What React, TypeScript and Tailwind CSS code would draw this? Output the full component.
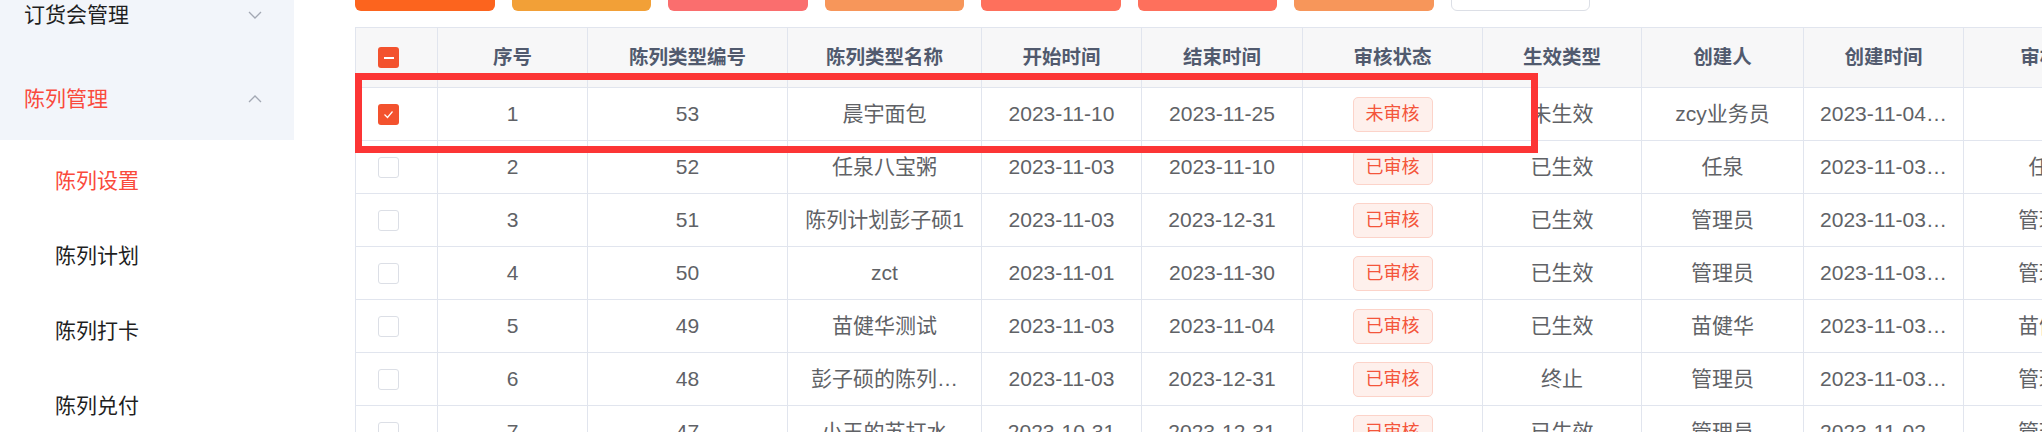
import React from 'react';

type Row = {
  no: number;
  code: number;
  name: string;
  start: string;
  end: string;
  audited: boolean;
  effect: string;
  creator: string;
  created: string;
  auditor: string;
};

const rows: Row[] = [
  { no: 1, code: 53, name: '晨宇面包', start: '2023-11-10', end: '2023-11-25', audited: false, effect: '未生效', creator: 'zcy业务员', created: '2023-11-04…', auditor: '' },
  { no: 2, code: 52, name: '任泉八宝粥', start: '2023-11-03', end: '2023-11-10', audited: true, effect: '已生效', creator: '任泉', created: '2023-11-03…', auditor: '任泉' },
  { no: 3, code: 51, name: '陈列计划彭子硕1', start: '2023-11-03', end: '2023-12-31', audited: true, effect: '已生效', creator: '管理员', created: '2023-11-03…', auditor: '管理员' },
  { no: 4, code: 50, name: 'zct', start: '2023-11-01', end: '2023-11-30', audited: true, effect: '已生效', creator: '管理员', created: '2023-11-03…', auditor: '管理员' },
  { no: 5, code: 49, name: '苗健华测试', start: '2023-11-03', end: '2023-11-04', audited: true, effect: '已生效', creator: '苗健华', created: '2023-11-03…', auditor: '苗健华' },
  { no: 6, code: 48, name: '彭子硕的陈列…', start: '2023-11-03', end: '2023-12-31', audited: true, effect: '终止', creator: '管理员', created: '2023-11-03…', auditor: '管理员' },
  { no: 7, code: 47, name: '小王的苏打水', start: '2023-10-31', end: '2023-12-31', audited: true, effect: '已生效', creator: '管理员', created: '2023-11-02…', auditor: '管理员' },
];

const headers = ['序号', '陈列类型编号', '陈列类型名称', '开始时间', '结束时间', '审核状态', '生效类型', '创建人', '创建时间', '审核人'];

const buttonColors = ['bg-[#fc641e]', 'bg-[#f2a037]', 'bg-[#fa6e6e]', 'bg-[#f7965a]', 'bg-[#fe705c]', 'bg-[#fe705c]', 'bg-[#f7965a]'];

const gridCols = 'grid grid-cols-[82px_150px_200px_194px_160px_161px_180px_159px_162px_160px_172px]';
const cell = 'flex items-center justify-center border-r border-b border-[#e1e5ee] whitespace-nowrap overflow-hidden';

const Chevron = ({ up = false }: { up?: boolean }) => (
  <svg width="14" height="8" viewBox="0 0 14 8" className={up ? 'rotate-180' : ''}>
    <polyline points="1,1 7,7 13,1" fill="none" stroke="#a3a8b3" strokeWidth="1.3" />
  </svg>
);

const Checkbox = ({ state }: { state: 'none' | 'checked' | 'partial' }) => {
  if (state === 'none') {
    return <span className="block w-[21px] h-[21px] rounded-[3px] border border-[#dcdfe6] bg-white" />;
  }
  return (
    <span className="flex items-center justify-center w-[21px] h-[21px] rounded-[3px] bg-[#f3522e]">
      {state === 'partial' ? (
        <span className="block w-[10px] h-[2px] bg-white" />
      ) : (
        <svg width="21" height="21" viewBox="0 0 21 21">
          <polyline points="6.5,10.5 9.5,13.5 14.5,7.5" fill="none" stroke="#fff" strokeWidth="1.2" />
        </svg>
      )}
    </span>
  );
};

export default function App() {
  return (
    <div className="relative flex w-[2042px] h-[432px] overflow-hidden bg-white font-['Liberation_Sans','Noto_Sans_CJK_SC',sans-serif]">
      {/* Sidebar */}
      <aside className="w-[294px] shrink-0 text-[21px]">
        <div className="bg-[#f2f5fa] -mt-[27px]">
          <div className="h-[84px] flex items-center justify-between pl-[24px] pr-[32px] text-[#1f1f1f]">
            <span>订货会管理</span>
            <Chevron />
          </div>
          <div className="h-[83px] flex items-center justify-between pl-[24px] pr-[32px] text-[#fa4a3c]">
            <span>陈列管理</span>
            <Chevron up />
          </div>
        </div>
        <div className="pt-[3px]">
          <div className="h-[75px] flex items-center pl-[55px] text-[#fa4a3c]">陈列设置</div>
          <div className="h-[75px] flex items-center pl-[55px] text-[#1f1f1f]">陈列计划</div>
          <div className="h-[75px] flex items-center pl-[55px] text-[#1f1f1f]">陈列打卡</div>
          <div className="h-[75px] flex items-center pl-[55px] text-[#1f1f1f]">陈列兑付</div>
        </div>
      </aside>

      {/* Main */}
      <main className="flex-1 min-w-0 overflow-hidden pl-[61px]">
        <div className="flex gap-[17px] -mt-[29px]">
          {buttonColors.map((c, i) => (
            <div key={i} className={`w-[139.5px] h-[40px] shrink-0 rounded-[6px] ${c}`} />
          ))}
          <div className="w-[139.5px] h-[40px] shrink-0 rounded-[6px] bg-white border border-[#dcdfe6]" />
        </div>

        <div className="mt-[16px] w-max border-l border-t border-[#e1e5ee]">
          <div className={`${gridCols} h-[60px] bg-[#f7f7f8] text-[19.5px] font-bold text-[#515a6e]`}>
            <div className={`${cell} !justify-start pl-[22px]`}>
              <Checkbox state="partial" />
            </div>
            {headers.map(h => (
              <div key={h} className={cell}>{h}</div>
            ))}
          </div>

          {rows.map(r => (
            <div key={r.no} className={`${gridCols} h-[53px] text-[21px] text-[#606266]`}>
              <div className={`${cell} !justify-start pl-[22px]`}>
                <Checkbox state={r.no === 1 ? 'checked' : 'none'} />
              </div>
              <div className={cell}>{r.no}</div>
              <div className={cell}>{r.code}</div>
              <div className={cell}>{r.name}</div>
              <div className={cell}>{r.start}</div>
              <div className={cell}>{r.end}</div>
              <div className={cell}>
                <span className="h-[35px] px-[12px] flex items-center rounded-[5px] border border-[#fcd3c9] bg-[#fef0ec] text-[18px] text-[#f4553b]">
                  {r.audited ? '已审核' : '未审核'}
                </span>
              </div>
              <div className={cell}>{r.effect}</div>
              <div className={cell}>{r.creator}</div>
              <div className={cell}>{r.created}</div>
              <div className={cell}>{r.auditor}</div>
            </div>
          ))}
        </div>
      </main>

      {/* annotation box */}
      <div className="pointer-events-none absolute left-[355px] top-[73px] w-[1183px] h-[80px] border-[7px] border-[#fc3535]" />
    </div>
  );
}
